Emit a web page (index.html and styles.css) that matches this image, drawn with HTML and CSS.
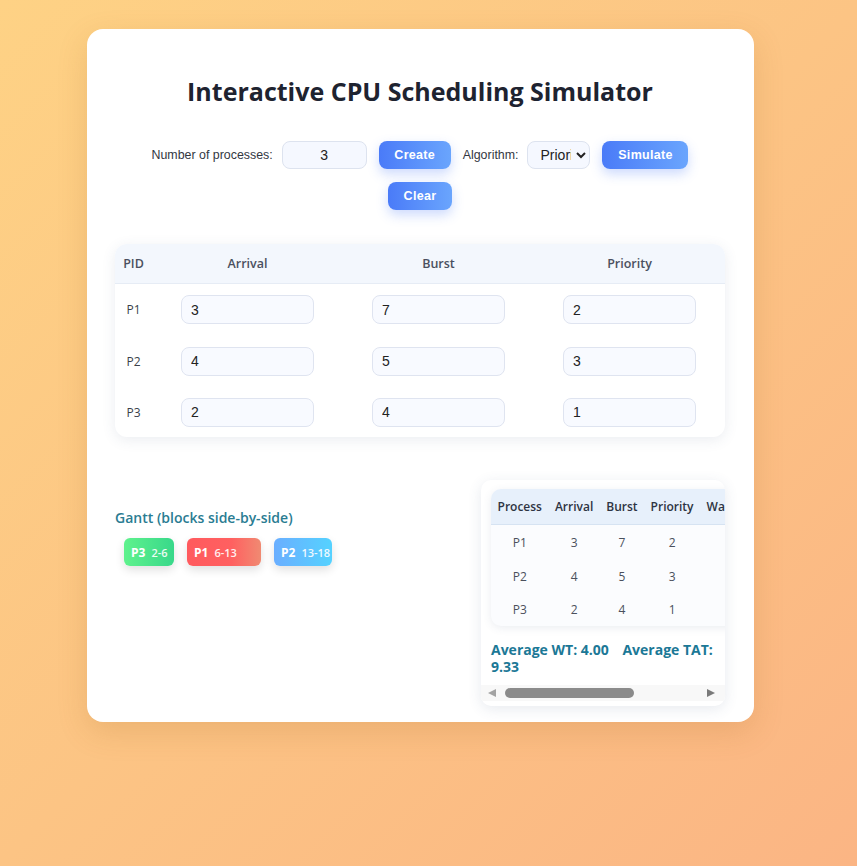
FILE: index.html
```html
<!DOCTYPE html>
<html lang="en">
<head>
<meta charset="utf-8">
<title>Interactive CPU Scheduling Simulator</title>
<link rel="stylesheet" href="styles.css">
</head>
<body>
<main class="card">
  <h1 class="title">Interactive CPU Scheduling Simulator</h1>
  <div class="controls">
    <div class="field">
      <label class="label" for="n">Number of processes:</label>
      <input id="n" class="num-input" type="text" value="3">
    </div>
    <button class="btn btn-create">Create</button>
    <div class="field">
      <label class="label" for="alg">Algorithm:</label>
      <select id="alg" class="select"><option>Priority</option></select>
    </div>
    <button class="btn btn-sim">Simulate</button>
    <button class="btn btn-clear">Clear</button>
  </div>

  <div class="proc-card">
    <table class="proc-table">
      <thead>
        <tr><th class="pid-col">PID</th><th>Arrival</th><th>Burst</th><th>Priority</th></tr>
      </thead>
      <tbody>
        <tr><td class="pid">P1</td><td><input class="cell-input" value="3"></td><td><input class="cell-input" value="7"></td><td><input class="cell-input" value="2"></td></tr>
        <tr><td class="pid">P2</td><td><input class="cell-input" value="4"></td><td><input class="cell-input" value="5"></td><td><input class="cell-input" value="3"></td></tr>
        <tr><td class="pid">P3</td><td><input class="cell-input" value="2"></td><td><input class="cell-input" value="4"></td><td><input class="cell-input" value="1"></td></tr>
      </tbody>
    </table>
  </div>

  <section class="bottom">
    <div class="gantt">
      <h3 class="gantt-title">Gantt (blocks side-by-side)</h3>
      <div class="blocks">
        <div class="block block-green" style="width:50px"><b>P3</b><span>2-6</span></div>
        <div class="block block-red" style="width:74px"><b>P1</b><span>6-13</span></div>
        <div class="block block-blue" style="width:58px"><b>P2</b><span>13-18</span></div>
      </div>
    </div>
    <div class="results">
      <div class="results-view">
        <div class="res-card">
          <table class="res-table">
            <thead>
              <tr><th>Process</th><th>Arrival</th><th>Burst</th><th>Priority</th><th>Waiting Time</th><th>Turnaround Time</th></tr>
            </thead>
            <tbody>
              <tr><td>P1</td><td>3</td><td>7</td><td>2</td><td>3</td><td>10</td></tr>
              <tr><td>P2</td><td>4</td><td>5</td><td>3</td><td>9</td><td>14</td></tr>
              <tr><td>P3</td><td>2</td><td>4</td><td>1</td><td>0</td><td>4</td></tr>
            </tbody>
          </table>
        </div>
        <div class="averages"><span class="avg">Average WT: 4.00</span> <span>Average TAT: 9.33</span></div>
      </div>
      <div class="hscroll" aria-hidden="true">
        <span class="arrow arrow-left"></span>
        <span class="track"><span class="thumb"></span></span>
        <span class="arrow arrow-right"></span>
      </div>
    </div>
  </section>
</main>
</body>
</html>
```
FILE: styles.css
```css
html, body {
  margin: 0;
  padding: 0;
}
body {
  min-height: 866px;
  background: linear-gradient(135deg, #fed285 0%, #fcc484 50%, #fbb584 100%);
  font-family: "Open Sans", "Noto Sans", sans-serif;
  color: #1f2430;
  padding-top: 29px;
  box-sizing: border-box;
}
.card {
  margin-left: 87px;
  width: 667px;
  height: 693px;
  box-sizing: border-box;
  background: #fff;
  border-radius: 16px;
  box-shadow: 0 10px 30px rgba(160, 100, 30, 0.18);
  padding: 28px 29px 17px 28px;
}
.title {
  margin: 17px 0 33px;
  text-align: center;
  font-size: 25px;
  font-weight: 700;
  line-height: 34px;
  color: #1e2330;
}
.controls {
  max-width: 580px;
  margin: 0 auto;
  display: flex;
  flex-wrap: wrap;
  justify-content: center;
  align-items: center;
  gap: 13px 12px;
}
.field {
  display: flex;
  align-items: center;
  gap: 9px;
}
.label {
  font-family: "Liberation Sans", Arial, sans-serif;
  font-size: 12.4px;
  color: #33373f;
}
.num-input {
  width: 85px;
  height: 28px;
  box-sizing: border-box;
  border: 1.5px solid #dde3ef;
  border-radius: 8px;
  background: #f5f8ff;
  text-align: center;
  font-family: "Liberation Sans", Arial, sans-serif;
  font-size: 14px;
  color: #222;
  outline: none;
}
.select {
  width: 63px;
  height: 28px;
  box-sizing: border-box;
  border: 1.5px solid #dde3ef;
  border-radius: 8px;
  background: #f5f8ff;
  font-family: "Liberation Sans", Arial, sans-serif;
  font-size: 14px;
  color: #222;
  padding: 0 2px 0 8px;
}
.btn {
  height: 28px;
  border: none;
  border-radius: 8px;
  background: linear-gradient(90deg, #4a7bf8 0%, #6aa5fd 100%);
  color: #fff;
  font-family: "Liberation Sans", Arial, sans-serif;
  font-weight: 700;
  font-size: 12.5px;
  letter-spacing: 0.3px;
  box-shadow: 0 5px 12px rgba(74, 123, 248, 0.28);
  cursor: pointer;
}
.btn-create { width: 72px; }
.btn-sim { width: 86px; }
.btn-clear { width: 64px; }

.proc-card {
  margin-top: 34px;
  border-radius: 12px;
  overflow: hidden;
  background: #fff;
  box-shadow: 0 3px 14px rgba(60, 80, 120, 0.10);
}
.proc-table {
  width: 100%;
  border-collapse: collapse;
  table-layout: fixed;
}
.proc-table th {
  background: #f3f7fd;
  height: 39px;
  padding: 0;
  font-size: 12.5px;
  font-weight: 600;
  color: #4a5060;
  text-align: center;
  border-bottom: 1px solid #e6ecf5;
}
.proc-table th.pid-col { width: 37px; }
.proc-table td {
  height: 52px;
  padding: 0;
  text-align: center;
}
.proc-table tbody tr:first-child td { height: 51px; }
.proc-table tbody tr:last-child td { height: 50px; }
.pid {
  font-size: 12px;
  color: #3a3f4a;
}
.cell-input {
  width: 133px;
  height: 29px;
  box-sizing: border-box;
  border: 1.5px solid #dfe4f0;
  border-radius: 8px;
  background: #f8faff;
  padding: 0 9px;
  font-family: "Liberation Sans", Arial, sans-serif;
  font-size: 14px;
  color: #222;
  outline: none;
}

.bottom {
  margin-top: 43px;
  display: flex;
  gap: 12px;
  align-items: flex-start;
}
.gantt {
  flex: 1;
}
.gantt-title {
  margin: 28px 0 10px;
  font-size: 14px;
  font-weight: 600;
  line-height: 20px;
  color: #2a7c92;
}
.blocks {
  display: flex;
  gap: 13px;
  padding-left: 9px;
}
.block {
  height: 28px;
  box-sizing: border-box;
  border-radius: 6px;
  display: flex;
  align-items: center;
  padding-left: 7px;
  gap: 6px;
  color: #fff;
  white-space: nowrap;
  box-shadow: 0 4px 10px rgba(0, 0, 0, 0.12);
}
.block b {
  font-size: 12px;
  font-weight: 700;
}
.block span {
  font-size: 11px;
  font-weight: 600;
  opacity: 0.9;
}
.block-green { background: linear-gradient(90deg, #5ff28d, #38d88a); }
.block-red { background: linear-gradient(90deg, #ff5a5e 0%, #ff6060 60%, #f08a72 100%); }
.block-blue { background: linear-gradient(90deg, #6aaeff, #55d2ff); }

.results {
  width: 244px;
  box-sizing: border-box;
  background: #fff;
  border-radius: 10px;
  box-shadow: 0 3px 14px rgba(60, 80, 120, 0.12);
  overflow: hidden;
}
.results-view {
  padding: 9px 0 10px 10px;
  overflow: hidden;
}
.res-card {
  display: inline-block;
  border-radius: 10px;
  overflow: hidden;
  background: #fbfcfe;
  box-shadow: 0 2px 8px rgba(60, 80, 120, 0.10);
  white-space: nowrap;
}
.res-table {
  border-collapse: collapse;
  white-space: nowrap;
}
.res-table th {
  background: #e7f0fb;
  height: 35px;
  padding: 0 6.5px;
  font-size: 12px;
  font-weight: 600;
  color: #2e3442;
  border-bottom: 1px solid #d6e3f2;
}
.res-table td {
  height: 34px;
  padding: 0 6.5px;
  text-align: center;
  font-size: 12px;
  color: #4a505c;
}
.res-table tbody tr:last-child td { height: 33px; }
.averages {
  width: 224px;
  margin-top: 10px;
  font-size: 14px;
  font-weight: 700;
  line-height: 17px;
  color: #1b7896;
}
.avg { margin-right: 10px; }

.hscroll {
  display: flex;
  align-items: center;
  height: 16px;
  background: #f8f8f8;
  padding: 0 10px 0 7px;
  margin-bottom: 5px;
}
.arrow {
  width: 0;
  height: 0;
  border-top: 4.5px solid transparent;
  border-bottom: 4.5px solid transparent;
}
.arrow-left { border-right: 8px solid #a3a3a3; }
.arrow-right { border-left: 8px solid #7a7a7a; }
.track {
  flex: 1;
  margin: 0 11px 0 9px;
  display: flex;
}
.thumb {
  width: 129px;
  height: 10px;
  border-radius: 5px;
  background: #8b8b8b;
}
```
